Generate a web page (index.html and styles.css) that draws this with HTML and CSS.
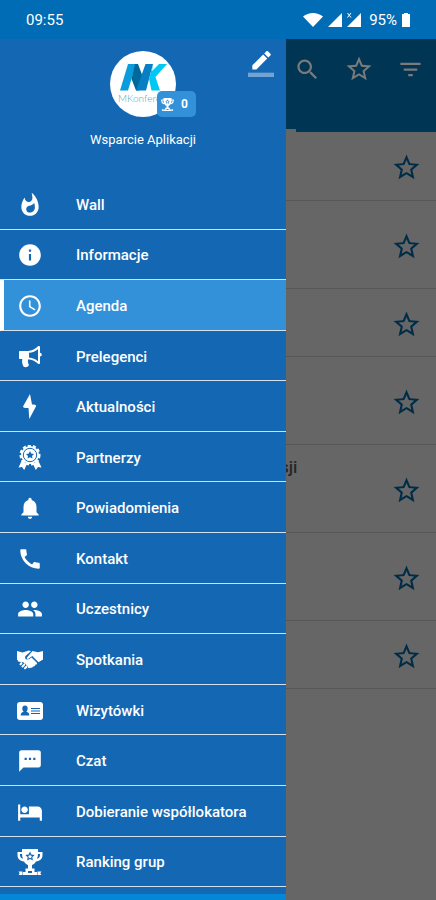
FILE: index.html
```html
<!DOCTYPE html>
<html lang="pl">
<head>
<meta charset="utf-8">
<meta name="viewport" content="width=device-width, initial-scale=1">
<title>Agenda</title>
<link rel="stylesheet" href="styles.css">
</head>
<body>
<svg class="defs" aria-hidden="true">
  <symbol id="star" viewBox="0 0 24 24"><path d="M22 9.240l-7.190-.62L12 2 9.190 8.630 2 9.240l5.460 4.730L5.820 21 12 17.270 18.180 21l-1.630-7.030L22 9.240zM12 15.400l-3.760 2.270 1-4.280-3.320-2.880 4.380-.38L12 6.100l1.710 4.040 4.380.38-3.320 2.880 1 4.280L12 15.400z"/></symbol>
  <symbol id="trophy" viewBox="0 0 26 26">
    <path fill-rule="evenodd" d="M5 0h16v3h4.500v3c0 4-2.500 6-6.500 6.500-1 1.700-2.500 3-4 3.500v3.500h2.500V23H20v3H6v-3h2.500v-3.500H11V16c-1.500-.5-3-1.800-4-3.500C3 12 .5 10 .5 6V3H5zM3 5v1c0 2 1 3.300 3 3.800C5.300 8.300 5 6.500 5 5zm18 0c0 1.500-.3 3.300-1 4.800 2-.5 3-1.800 3-3.800V5zM13 2.500l-1.400 3-3.200.4 2.300 2.300-.6 3.300L13 10l2.900 1.500-.6-3.300 2.300-2.300-3.200-.4zM11 22v2h4v-2z"/>
    <path d="M13 5.200l.7 1.500 1.500.2-1.100 1.100.3 1.600-1.400-.8-1.400.8.3-1.600-1.100-1.100 1.500-.2zM1.500 22.500h4V26h-4l1.200-1.700zM20.500 22.500h4l-1.200 1.800 1.200 1.700h-4z"/>
  </symbol>
</svg>

<header class="status">
  <time>09:55</time>
  <div class="status-icons">
    <svg class="wifi" viewBox="0 0 20 14"><path d="M0 3.500C3 1.200 6.400 0 10 0s7 1.200 10 3.500L10 14z"/></svg>
    <svg class="signal" viewBox="0 0 14 14"><path d="M14 0v14H0z"/></svg>
    <svg class="signal" viewBox="0 0 14 14"><path d="M14 0v14H0z"/><path class="cross" d="M.5 0l3.500 4.500M4 0L.5 4.500"/></svg>
    <span class="percent">95%</span>
    <svg class="battery" viewBox="0 0 8 14"><path d="M2 0h4v1h2v13H0V1h2z"/></svg>
  </div>
</header>

<div class="stage">
  <main class="app">
    <div class="toolbar">
      <div class="actions">
        <button aria-label="Szukaj"><svg viewBox="0 0 24 24"><path d="M15.500 14h-.79l-.28-.27C15.410 12.590 16 11.110 16 9.500 16 5.910 13.090 3 9.500 3S3 5.910 3 9.500 5.910 16 9.500 16c1.610 0 3.090-.59 4.230-1.570l.27.28v.79l5 4.990L20.490 19l-4.990-5zm-6 0C7.010 14 5 11.990 5 9.500S7.010 5 9.500 5 14 7.010 14 9.500 11.990 14 9.500 14z"/></svg></button>
        <button aria-label="Ulubione"><svg class="favourite"><use href="#star"/></svg></button>
        <button aria-label="Filtruj"><svg viewBox="0 0 24 24"><path d="M10 18h4v-2h-4v2zM3 6v2h18V6H3zm3 7h12v-2H6v2z"/></svg></button>
      </div>
      <div class="tab-line"></div>
    </div>
    <ul class="sessions">
      <li class="short"><button aria-label="Dodaj do ulubionych"><svg><use href="#star"/></svg></button></li>
      <li class="tall"><button aria-label="Dodaj do ulubionych"><svg><use href="#star"/></svg></button></li>
      <li class="short"><button aria-label="Dodaj do ulubionych"><svg><use href="#star"/></svg></button></li>
      <li class="tall"><button aria-label="Dodaj do ulubionych"><svg><use href="#star"/></svg></button></li>
      <li class="tall"><span class="session-title">sji</span><button aria-label="Dodaj do ulubionych"><svg><use href="#star"/></svg></button></li>
      <li class="tall"><button aria-label="Dodaj do ulubionych"><svg><use href="#star"/></svg></button></li>
      <li class="short"><button aria-label="Dodaj do ulubionych"><svg><use href="#star"/></svg></button></li>
    </ul>
  </main>

  <aside class="drawer">
    <div class="profile">
      <div class="avatar">
        <svg class="logo" viewBox="0 0 66 66">
          <circle cx="33" cy="33" r="33" fill="#fff"/>
          <path fill="#0b9cdb" d="M18 13h8l-8 26.500h-8z"/>
          <path fill="#00699b" d="M25 13h3l6 16-5 10.500h-3L21.500 28z"/>
          <path fill="#087fc5" d="M35.500 13H43l-7 26.500H26z"/>
          <path fill="#00c8f5" d="M43 13l-4 15 2.500 11.500H50L45.500 26 57 13h-8l-7 7z"/>
          <text x="8" y="51">MKonferen</text>
        </svg>
        <span class="points"><svg><use href="#trophy"/></svg>0</span>
      </div>
      <p class="name">Wsparcie Aplikacji</p>
      <button class="edit" aria-label="Edytuj profil"><svg viewBox="0 0 24 24"><path d="M17.750 7L14 3.250l-10 10V17h3.750l10-10zm2.960-2.960c.39-.39.39-1.020 0-1.410L18.370.290c-.39-.39-1.020-.39-1.410 0L15 2.250 18.750 6l1.960-1.960z"/><path opacity=".4" d="M0 20h24v4H0z"/></svg></button>
    </div>
    <nav class="menu">
      <a href="#wall"><svg viewBox="0 0 24 24"><path d="M13.500.670s.74 2.650.74 4.800c0 2.060-1.350 3.730-3.410 3.730-2.070 0-3.630-1.670-3.630-3.730l.03-.36C5.210 7.510 4 10.620 4 14c0 4.420 3.580 8 8 8s8-3.580 8-8C20 8.610 17.410 3.800 13.500.670zM11.710 19c-1.780 0-3.220-1.400-3.220-3.140 0-1.620 1.050-2.760 2.810-3.120 1.770-.36 3.600-1.210 4.620-2.580.39 1.290.59 2.650.59 4.040 0 2.650-2.150 4.800-4.800 4.800z"/></svg>Wall</a>
      <a href="#informacje"><svg viewBox="0 0 24 24"><path d="M12 2C6.480 2 2 6.480 2 12s4.480 10 10 10 10-4.480 10-10S17.520 2 12 2zm1 15h-2v-6h2v6zm0-8h-2V7h2v2z"/></svg>Informacje</a>
      <a href="#agenda" class="active" aria-current="page"><svg viewBox="0 0 24 24"><path d="M11.990 2C6.470 2 2 6.480 2 12s4.470 10 9.990 10C17.520 22 22 17.520 22 12S17.520 2 11.990 2zM12 20c-4.420 0-8-3.580-8-8s3.580-8 8-8 8 3.580 8 8-3.580 8-8 8zm.5-13H11v6l5.250 3.150.75-1.230-4.500-2.670z"/></svg>Agenda</a>
      <a href="#prelegenci"><svg viewBox="0 0 26 26"><path fill-rule="evenodd" d="M3 7h8c4-.3 7.500-2 10-4.700 1-.8 2-.3 2 .7v5.800c1.300.3 1.700 1 1.700 1.900s-.4 1.600-1.700 1.900V19c0 1-1 1.500-2 .7-2.300-2.200-5-3.800-8.500-4.300l-1.500.1c-.2 2 0 4 1 5.500-1 2.300-4 2.800-5.500 1.500-1.300-2.200-1.700-5-1.200-7.500H3c-.7 0-1-.4-1-1V8c0-.6.4-1 1-1zm9 1.800v4.800c3.500.4 6.500 1.700 9 3.700V5.200c-2.500 2-5.500 3.300-9 3.600z"/></svg>Prelegenci</a>
      <a href="#aktualnosci"><svg viewBox="0 0 26 26"><path d="M13 0L6 12.500c0 1.500 3 1.700 5.500 1.500l.8 11L19.200 12c0-1.200-2-1.500-4.200-1.500z"/></svg>Aktualności</a>
      <a href="#partnerzy"><svg viewBox="0 0 26 26"><path d="M5 15l5 4-2.800 6-2.200-3-3.500.5zM21 15l-5 4 2.800 6 2.200-3 3.500.5z"/><circle class="scallop" cx="13" cy="10" r="9"/><circle class="seal-base" cx="13" cy="10" r="9"/><circle class="seal-ring" cx="13" cy="10" r="6.700"/><path class="cut" d="M13 6l1.200 2.500 2.800.4-2 2 .5 2.700-2.500-1.300-2.500 1.300.5-2.700-2-2 2.800-.4z"/></svg>Partnerzy</a>
      <a href="#powiadomienia"><svg viewBox="0 0 24 24"><path d="M12 22c1.100 0 2-.9 2-2h-4c0 1.100.89 2 2 2zm6-6v-5c0-3.070-1.640-5.640-4.500-6.320V4c0-.83-.67-1.500-1.500-1.500s-1.500.67-1.500 1.500v.68C7.630 5.360 6 7.920 6 11v5l-2 2v1h16v-1l-2-2z"/></svg>Powiadomienia</a>
      <a href="#kontakt"><svg viewBox="0 0 24 24"><path d="M20.010 15.380c-1.230 0-2.420-.2-3.530-.56-.35-.12-.74-.03-1.010.24l-1.570 1.970c-2.830-1.350-5.480-3.900-6.890-6.830l1.950-1.660c.27-.28.35-.67.24-1.020-.37-1.110-.56-2.300-.56-3.530 0-.54-.45-.99-.99-.99H4.190C3.650 3 3 3.240 3 3.990 3 13.280 10.730 21 20.010 21c.71 0 .99-.63.99-1.180v-3.450c0-.54-.45-.99-.99-.99z"/></svg>Kontakt</a>
      <a href="#uczestnicy"><svg viewBox="0 0 24 24"><path d="M16 11c1.660 0 2.990-1.340 2.990-3S17.660 5 16 5c-1.660 0-3 1.340-3 3s1.340 3 3 3zm-8 0c1.660 0 2.990-1.340 2.990-3S9.660 5 8 5C6.340 5 5 6.340 5 8s1.340 3 3 3zm0 2c-2.330 0-7 1.170-7 3.500V19h14v-2.500c0-2.330-4.670-3.500-7-3.500zm8 0c-.29 0-.62.020-.97.050 1.160.84 1.970 1.970 1.970 3.450V19h6v-2.500c0-2.330-4.670-3.500-7-3.500z"/></svg>Uczestnicy</a>
      <a href="#spotkania"><svg viewBox="0 0 26 26"><path d="M0 4l5.500 1.500 6.500-2 2 .7-5.500 4.700c-1 1.500-.3 3.500 1.500 3.700 1.500 0 3-1 4.500-2l5.200 5c.9 1.500-.3 2.600-1.500 2 .3 1.300-.9 2.300-2.100 1.700-.1 1.200-1.300 1.700-2.300 1.200-.5 1-1.700 1-2.500.3l-.8.700c1-1.500.2-3-1.300-3 .2-1.500-1-2.300-2.200-1.900-.2-1.600-1.800-2-2.900-.9-.5-1-1.400-1.200-2.300-.7L0 12.500z"/><path d="M15.500 4l5.500 1.300L26 4v8.500l-4.500 2.700-6.200-6.300-4 2.900c-1 .6-2-.3-1.300-1.300z"/><path class="fingers" d="M3.500 17.200l1-1M5.500 19.500l1.800-1.900M8 21.300l1.400-1.500"/></svg>Spotkania</a>
      <a href="#wizytowki"><svg viewBox="0 0 26 26"><rect y="4" width="26" height="18" rx="3"/><path class="cut" d="M8 7.500c3.400 0 3.300 4.300 1.300 6.200 1.800.5 3 1.200 3 3.800H3.700c0-2.600 1.200-3.300 3-3.800C4.700 11.800 4.600 7.500 8 7.500zM14 10h9v1h-9zm0 2.500h9v1h-9zm0 2.500h9v1h-9z"/></svg>Wizytówki</a>
      <a href="#czat"><svg viewBox="0 0 24 24"><path d="M20 2H4c-1.100 0-1.990.9-1.990 2L2 22l4-4h14c1.100 0 2-.9 2-2V4c0-1.100-.9-2-2-2zM9 11H7V9h2v2zm4 0h-2V9h2v2zm4 0h-2V9h2v2z"/></svg>Czat</a>
      <a href="#dobieranie"><svg viewBox="0 0 24 24"><path d="M7 13c1.660 0 3-1.340 3-3S8.660 7 7 7s-3 1.340-3 3 1.340 3 3 3zm12-6h-8v7H3V5H1v15h2v-3h18v3h2v-9c0-2.210-1.790-4-4-4z"/></svg>Dobieranie współlokatora</a>
      <a href="#ranking"><svg><use href="#trophy"/></svg>Ranking grup</a>
    </nav>
    <div class="drawer-end"></div>
  </aside>
</div>
</body>
</html>
```
FILE: styles.css
```css
* { box-sizing: border-box; }

body {
  margin: 0;
  min-height: 100vh;
  display: flex;
  flex-direction: column;
  font-family: Roboto, "Liberation Sans", sans-serif;
  background: #666;
}

button {
  padding: 0;
  border: 0;
  background: none;
  color: inherit;
}

svg { display: block; fill: currentColor; }

.defs { position: absolute; width: 0; height: 0; }

.status {
  display: flex;
  justify-content: space-between;
  align-items: center;
  height: 39px;
  padding: 0 26px;
  background: #006cb5;
  color: #fff;
  font-size: 15px;
}

.status-icons { display: flex; align-items: center; gap: 5px; }
.wifi { width: 20px; height: 14px; }
.signal { width: 14px; height: 14px; overflow: visible; }
.cross { stroke: #fff; stroke-width: 1; }
.percent { margin-left: 3px; }
.battery { width: 8px; height: 14px; }

.stage {
  position: relative;
  flex: 1;
  display: flex;
  flex-direction: column;
}

.app { flex: 1; }

.toolbar {
  display: flex;
  flex-direction: column;
  justify-content: space-between;
  height: 93px;
  background: #003554;
  color: #7a7a7a;
}

.actions {
  display: flex;
  align-items: center;
  justify-content: flex-end;
  gap: 23px;
  padding: 15px 12px 0 0;
}

.actions svg { width: 27px; height: 27px; }
.actions .favourite { width: 30px; height: 30px; }
.tab-line { width: 296px; height: 3px; background: #666; }

.sessions { margin: 0; padding: 0; list-style: none; color: #002c47; }

.sessions li {
  display: flex;
  justify-content: flex-end;
  align-items: center;
  padding: 3px 14px 0 0;
  border-bottom: 1px solid #575757;
}

.sessions svg { width: 31px; height: 31px; }
.short { height: 68px; }
.tall { height: 88px; }
.sessions .short:first-child { height: 69px; }

.session-title {
  flex: 1;
  align-self: flex-start;
  margin: 9px 0 0 280px;
  color: #262626;
  font-size: 17px;
  font-weight: 500;
  line-height: 20px;
}

.drawer {
  position: absolute;
  top: 0;
  bottom: 0;
  left: 0;
  width: 286px;
  display: flex;
  flex-direction: column;
  background: #1467b3;
  color: #fff;
}

.profile {
  position: relative;
  display: flex;
  flex-direction: column;
  align-items: center;
  height: 140px;
  padding-top: 12px;
}

.avatar { position: relative; }
.logo { width: 66px; height: 66px; }

.logo text {
  fill: #5c9fbe;
  font-family: Lato, sans-serif;
  font-size: 10px;
  font-weight: 300;
}

.points {
  position: absolute;
  right: -20px;
  bottom: 0;
  display: flex;
  align-items: center;
  gap: 7px;
  width: 39px;
  height: 26px;
  padding-left: 4px;
  border-radius: 5px;
  background: #3391da;
  font-size: 12px;
  font-weight: 700;
}

.points svg { width: 13px; height: 13px; }

.name { margin: 15px 0 0; font-size: 13px; line-height: 16px; }

.edit { position: absolute; top: 12px; right: 12px; }
.edit svg { width: 26px; height: 26px; }

.menu {
  flex: 1;
  display: flex;
  flex-direction: column;
}

.menu a {
  flex: 1;
  display: flex;
  align-items: center;
  gap: 33px;
  padding: 2px 0 0 17px;
  border-bottom: 1px solid #d2e0ef;
  color: #fff;
  font-size: 15px;
  font-weight: 500;
  text-decoration: none;
}

.menu svg { width: 26px; height: 26px; }

.menu .active {
  padding-left: 13px;
  border-left: 4px solid #fff;
  background: #3391da;
}

.cut { fill: #1467b3; }
.scallop { fill: none; stroke: #fff; stroke-width: 3; stroke-dasharray: 3 2; }
.seal-base { fill: #fff; }
.seal-ring { fill: none; stroke: #1467b3; stroke-width: 1; }
.fingers { fill: none; stroke: #fff; stroke-width: 2; stroke-linecap: round; }

.drawer-end {
  height: 13px;
  border-bottom: 6px solid #0487d6;
}
```
